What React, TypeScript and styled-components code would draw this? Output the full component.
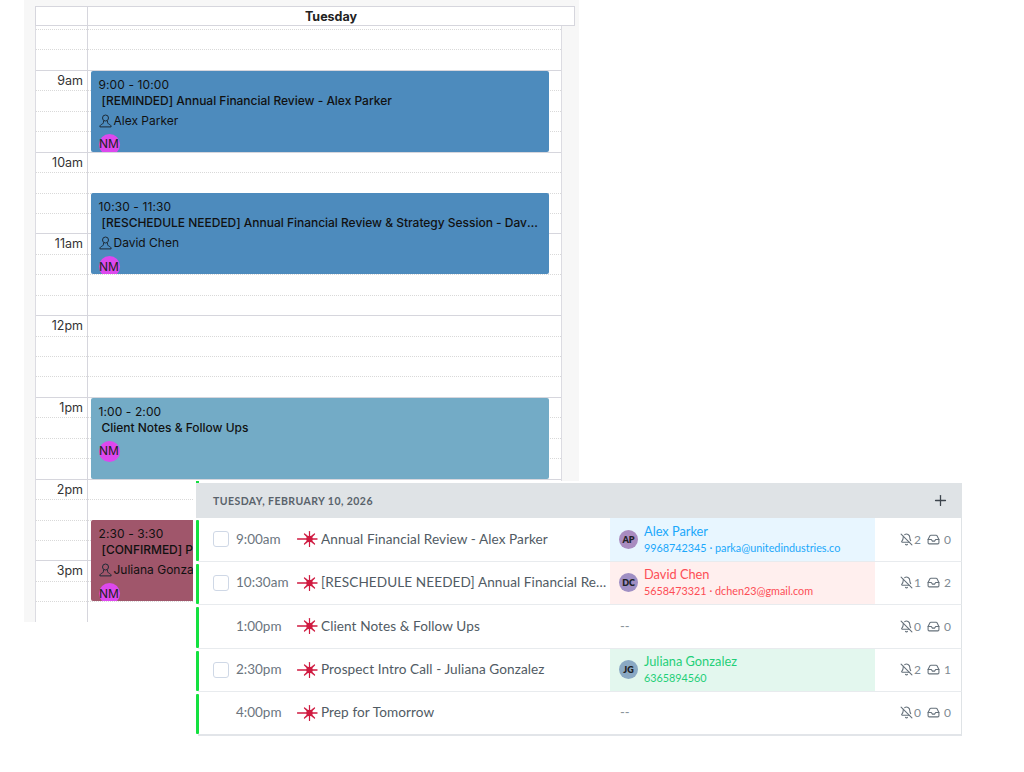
import { BellOff, Inbox, Plus } from "lucide-react";
import styled, { createGlobalStyle } from "styled-components";

const SLOT = 20.44;

const GlobalStyle = createGlobalStyle`
    html, body {
        margin: 0;
        padding: 0;
        background: #fff;
    }
    * {
        box-sizing: border-box;
    }
`;

const hourLabels: Record<number, string> = {
    3: "9am",
    7: "10am",
    11: "11am",
    15: "12pm",
    19: "1pm",
    23: "2pm",
    27: "3pm",
};

const calendarEvents = [
    {
        time: "9:00 - 10:00",
        title: "[REMINDED] Annual Financial Review - Alex Parker",
        person: "Alex Parker",
        slot: 3,
        color: "#4d8bbd",
    },
    {
        time: "10:30 - 11:30",
        title: "[RESCHEDULE NEEDED] Annual Financial Review & Strategy Session - David Chen",
        person: "David Chen",
        slot: 9,
        color: "#4d8bbd",
    },
    {
        time: "1:00 - 2:00",
        title: "Client Notes & Follow Ups",
        slot: 19,
        color: "#73abc6",
    },
    {
        time: "2:30 - 3:30",
        title: "[CONFIRMED] Prospect Intro Call - Juliana Gonzalez",
        person: "Juliana Gonzalez",
        slot: 25,
        color: "#a0566b",
    },
];

const tones = {
    blue: { bg: "#e8f6ff", fg: "#1ba8fb" },
    red: { bg: "#ffefee", fg: "#fd4d55" },
    green: { bg: "#e3f7ee", fg: "#1fcf78" },
};

type Contact = {
    initials: string;
    name: string;
    detail: string;
    tone: keyof typeof tones;
    avatar: string;
};

type Appointment = {
    time: string;
    title: string;
    checkbox?: boolean;
    contact?: Contact;
    reminders: number;
    inbox: number;
};

const appointments: Appointment[] = [
    {
        time: "9:00am",
        title: "Annual Financial Review - Alex Parker",
        checkbox: true,
        contact: {
            initials: "AP",
            name: "Alex Parker",
            detail: "9968742345 · parka@unitedindustries.co",
            tone: "blue",
            avatar: "#a98cc0",
        },
        reminders: 2,
        inbox: 0,
    },
    {
        time: "10:30am",
        title: "[RESCHEDULE NEEDED] Annual Financial Review",
        checkbox: true,
        contact: {
            initials: "DC",
            name: "David Chen",
            detail: "5658473321 · dchen23@gmail.com",
            tone: "red",
            avatar: "#a08fc4",
        },
        reminders: 1,
        inbox: 2,
    },
    { time: "1:00pm", title: "Client Notes & Follow Ups", reminders: 0, inbox: 0 },
    {
        time: "2:30pm",
        title: "Prospect Intro Call - Juliana Gonzalez",
        checkbox: true,
        contact: {
            initials: "JG",
            name: "Juliana Gonzalez",
            detail: "6365894560",
            tone: "green",
            avatar: "#8aa9c4",
        },
        reminders: 2,
        inbox: 1,
    },
    { time: "4:00pm", title: "Prep for Tomorrow", reminders: 0, inbox: 0 },
];

const slots = Array.from({ length: 30 }, (_, i) => i);

const PersonIcon = () => (
    <svg width="13" height="14" viewBox="0 0 13 14" fill="none" stroke="#1c2a36" strokeWidth="1">
        <circle cx="6.5" cy="4" r="3" />
        <path d="M4.6 7C4.6 9 4 9.8 2.6 10.4C1.4 10.9 0.9 11.6 0.9 12.9H12.1C12.1 11.6 11.6 10.9 10.4 10.4C9 9.8 8.4 9 8.4 7" />
    </svg>
);

const SparkIcon = () => (
    <svg width="22" height="18" viewBox="0 0 22 18" fill="none" stroke="#cf1a40" strokeLinecap="round">
        <path d="M0.5 9H20" strokeWidth="1.4" />
        <path d="M12.5 1.5V16.5" strokeWidth="1.2" />
        <path d="M7.5 4L17.5 14M17.5 4L7.5 14" strokeWidth="1.3" />
        <path d="M9.5 5L15.5 13M15.5 5L9.5 13" strokeWidth="1" />
        <circle cx="12.5" cy="9" r="3.2" fill="#cf1a40" stroke="none" />
    </svg>
);

export default function App() {
    return (
        <>
            <GlobalStyle />
            <Page>
                <Calendar>
                    <CalendarHeader>
                        <HeaderGutter />
                        <HeaderDay>Tuesday</HeaderDay>
                    </CalendarHeader>
                    <CalendarBody>
                        <TimeColumn>
                            {slots.map((i) => (
                                <Slot key={i} $first={i === 0} $hourEnd={i % 4 === 2}>
                                    {hourLabels[i]}
                                </Slot>
                            ))}
                        </TimeColumn>
                        <DayColumn>
                            {slots.map((i) => (
                                <Slot key={i} $first={i === 0} $hourEnd={i % 4 === 2} />
                            ))}
                            {calendarEvents.map((ev) => (
                                <EventCard key={ev.time} $slot={ev.slot} $color={ev.color}>
                                    <EventTime>{ev.time}</EventTime>
                                    <EventTitle>{ev.title}</EventTitle>
                                    {ev.person && (
                                        <EventPerson>
                                            <PersonIcon />
                                            {ev.person}
                                        </EventPerson>
                                    )}
                                    <Assignee $raised={!ev.person}>NM</Assignee>
                                </EventCard>
                            ))}
                        </DayColumn>
                    </CalendarBody>
                </Calendar>

                <AgendaPanel>
                    <GreenStub />
                    <AgendaHeader>
                        <AgendaDate>TUESDAY, FEBRUARY 10, 2026</AgendaDate>
                        <Plus size={17} color="#3d454d" strokeWidth={1.8} />
                    </AgendaHeader>
                    {appointments.map((a) => (
                        <AgendaRow key={a.time}>
                            <CheckCell>{a.checkbox && <CheckBox />}</CheckCell>
                            <TimeCell>{a.time}</TimeCell>
                            <SparkCell>
                                <SparkIcon />
                            </SparkCell>
                            <TitleCell>{a.title}</TitleCell>
                            {a.contact ? (
                                <ContactCell $tone={a.contact.tone}>
                                    <Avatar $color={a.contact.avatar}>{a.contact.initials}</Avatar>
                                    <ContactText>
                                        <ContactName>{a.contact.name}</ContactName>
                                        <ContactDetail>{a.contact.detail}</ContactDetail>
                                    </ContactText>
                                </ContactCell>
                            ) : (
                                <EmptyContact>--</EmptyContact>
                            )}
                            <CountsCell>
                                <BellOff size={13} strokeWidth={2} />
                                <CountValue>{a.reminders}</CountValue>
                                <InboxIcon size={13} strokeWidth={2} />
                                <CountValue>{a.inbox}</CountValue>
                            </CountsCell>
                        </AgendaRow>
                    ))}
                </AgendaPanel>
            </Page>
        </>
    );
}

const Page = styled.div`
    position: relative;
    width: 1024px;
    height: 772px;
    background: #fff;
    overflow: hidden;
`;

const Calendar = styled.div`
    margin-left: 24px;
    width: 555px;
    height: 622px;
    padding: 6px 0 0 11px;
    background: #f7f7f7;
    overflow: hidden;
    font-family: Inter, "Liberation Sans", sans-serif;
    color: #222;
`;

const CalendarHeader = styled.div`
    display: grid;
    grid-template-columns: 52px 1fr;
    width: 540px;
    height: 20px;
    background: #fff;
    border: 1px solid #d6d6dd;
`;

const HeaderGutter = styled.div`
    border-right: 1px solid #d6d6dd;
`;

const HeaderDay = styled.div`
    text-align: center;
    font-size: 12.5px;
    font-weight: 700;
    line-height: 19px;
    color: #222;
`;

const CalendarBody = styled.div`
    display: grid;
    grid-template-columns: 52px 1fr;
    width: 527px;
    background: #fff;
    border-left: 1px solid #dcdce2;
    border-right: 1px solid #dcdce2;
`;

const TimeColumn = styled.div`
    border-right: 1px solid #d6d6dd;
`;

const DayColumn = styled.div`
    position: relative;
`;

const Slot = styled.div<{ $first?: boolean; $hourEnd?: boolean }>`
    height: ${(p) => (p.$first ? 4 : SLOT)}px;
    border-bottom: 1px ${(p) => (p.$hourEnd ? "solid #d6d6dd" : "dotted #d9d9d9")};
    padding-right: 4px;
    text-align: right;
    font-size: 12.5px;
    line-height: 20px;
    color: #333;
`;

const EventCard = styled.div<{ $slot: number; $color: string }>`
    position: absolute;
    top: ${(p) => 3.5 + (p.$slot - 1) * SLOT + 0.3}px;
    left: 2.5px;
    right: 12.5px;
    height: 81px;
    padding: 6px 8px 0;
    border-radius: 2px;
    background: ${(p) => p.$color};
    overflow: hidden;
    font-size: 12px;
    line-height: 16px;
    color: #111;
`;

const EventTime = styled.div`
    letter-spacing: 0.1px;
`;

const EventTitle = styled.div`
    padding-left: 3px;
    font-weight: 500;
    letter-spacing: -0.02px;
    white-space: nowrap;
    overflow: hidden;
    text-overflow: ellipsis;
`;

const EventPerson = styled.div`
    display: flex;
    align-items: center;
    gap: 2px;
    margin-top: 4px;
`;

const Assignee = styled.div<{ $raised?: boolean }>`
    display: flex;
    align-items: center;
    justify-content: center;
    width: 21px;
    height: 21px;
    margin-top: ${(p) => (p.$raised ? "5px" : "5px")};
    border-radius: 50%;
    background: #dd48ee;
    font-size: 12px;
    color: #222;
`;

const AgendaPanel = styled.section`
    position: absolute;
    left: 193px;
    top: 481px;
    width: 769px;
    height: 256px;
    padding-left: 2px;
    background: #fff;
    font-family: Lato, "Open Sans", sans-serif;
    color: #55606a;
`;

const GreenStub = styled.div`
    width: 3px;
    height: 2px;
    margin-left: 1px;
    background: #13e13f;
`;

const AgendaHeader = styled.header`
    display: flex;
    align-items: center;
    justify-content: space-between;
    height: 35px;
    margin-left: 1px;
    padding: 0 13px 0 17px;
    background: #dfe3e6;
`;

const AgendaDate = styled.h2`
    margin: 0;
    font-size: 10.5px;
    font-weight: 700;
    letter-spacing: 0.44px;
    color: #59626b;
`;

const AgendaRow = styled.div`
    position: relative;
    display: grid;
    grid-template-columns: 39px 60px 24px 289px 265px 1fr;
    align-items: center;
    height: 43.5px;
    margin-left: 3px;
    background: #fff;
    border-right: 1px solid #dfe3e6;
    border-bottom: 1px solid #e8ebee;

    &::before {
        content: "";
        position: absolute;
        left: -2px;
        top: 2px;
        bottom: 0;
        width: 3px;
        border-radius: 1px;
        background: #13e13f;
    }

    &:last-child {
        border-bottom: 2px solid #e2e5e9;
    }
`;

const CheckCell = styled.div`
    padding-left: 15px;
`;

const CheckBox = styled.div`
    width: 16px;
    height: 16px;
    border: 1px solid #cfd8e6;
    border-radius: 3px;
    background: #fff;
`;

const TimeCell = styled.div`
    padding-bottom: 1px;
    margin-left: -1px;
    font-size: 13.5px;
    color: #6b757e;
`;

const SparkCell = styled.div`
    display: flex;
    align-items: center;
`;

const TitleCell = styled.div`
    padding: 0 2px 1px 0;
    font-size: 13.6px;
    letter-spacing: 0.08px;
    color: #515b64;
    white-space: nowrap;
    overflow: hidden;
    text-overflow: ellipsis;
`;

const ContactCell = styled.div<{ $tone: keyof typeof tones }>`
    display: flex;
    align-items: center;
    gap: 6px;
    height: 100%;
    padding-left: 9px;
    background: ${(p) => tones[p.$tone].bg};
    color: ${(p) => tones[p.$tone].fg};
`;

const Avatar = styled.div<{ $color: string }>`
    display: flex;
    align-items: center;
    justify-content: center;
    flex: none;
    width: 19px;
    height: 19px;
    border-radius: 50%;
    background: ${(p) => p.$color};
    font-size: 9px;
    font-weight: 800;
    color: #1e2227;
`;

const ContactText = styled.div`
    display: flex;
    flex-direction: column;
    gap: 2px;
`;

const ContactName = styled.div`
    font-size: 12.8px;
    line-height: 15px;
`;

const ContactDetail = styled.div`
    font-size: 10.8px;
    line-height: 14px;
`;

const EmptyContact = styled.div`
    padding: 0 0 1px 10px;
    font-size: 13px;
    color: #8a939b;
`;

const CountsCell = styled.div`
    display: flex;
    align-items: center;
    justify-content: flex-end;
    gap: 1px;
    padding-right: 10px;
    font-size: 12px;
    color: #66717b;
`;

const CountValue = styled.span`
    min-width: 7px;
    color: #808a93;
`;

const InboxIcon = styled(Inbox)`
    margin-left: 5px;
    margin-right: 3px;
`;
